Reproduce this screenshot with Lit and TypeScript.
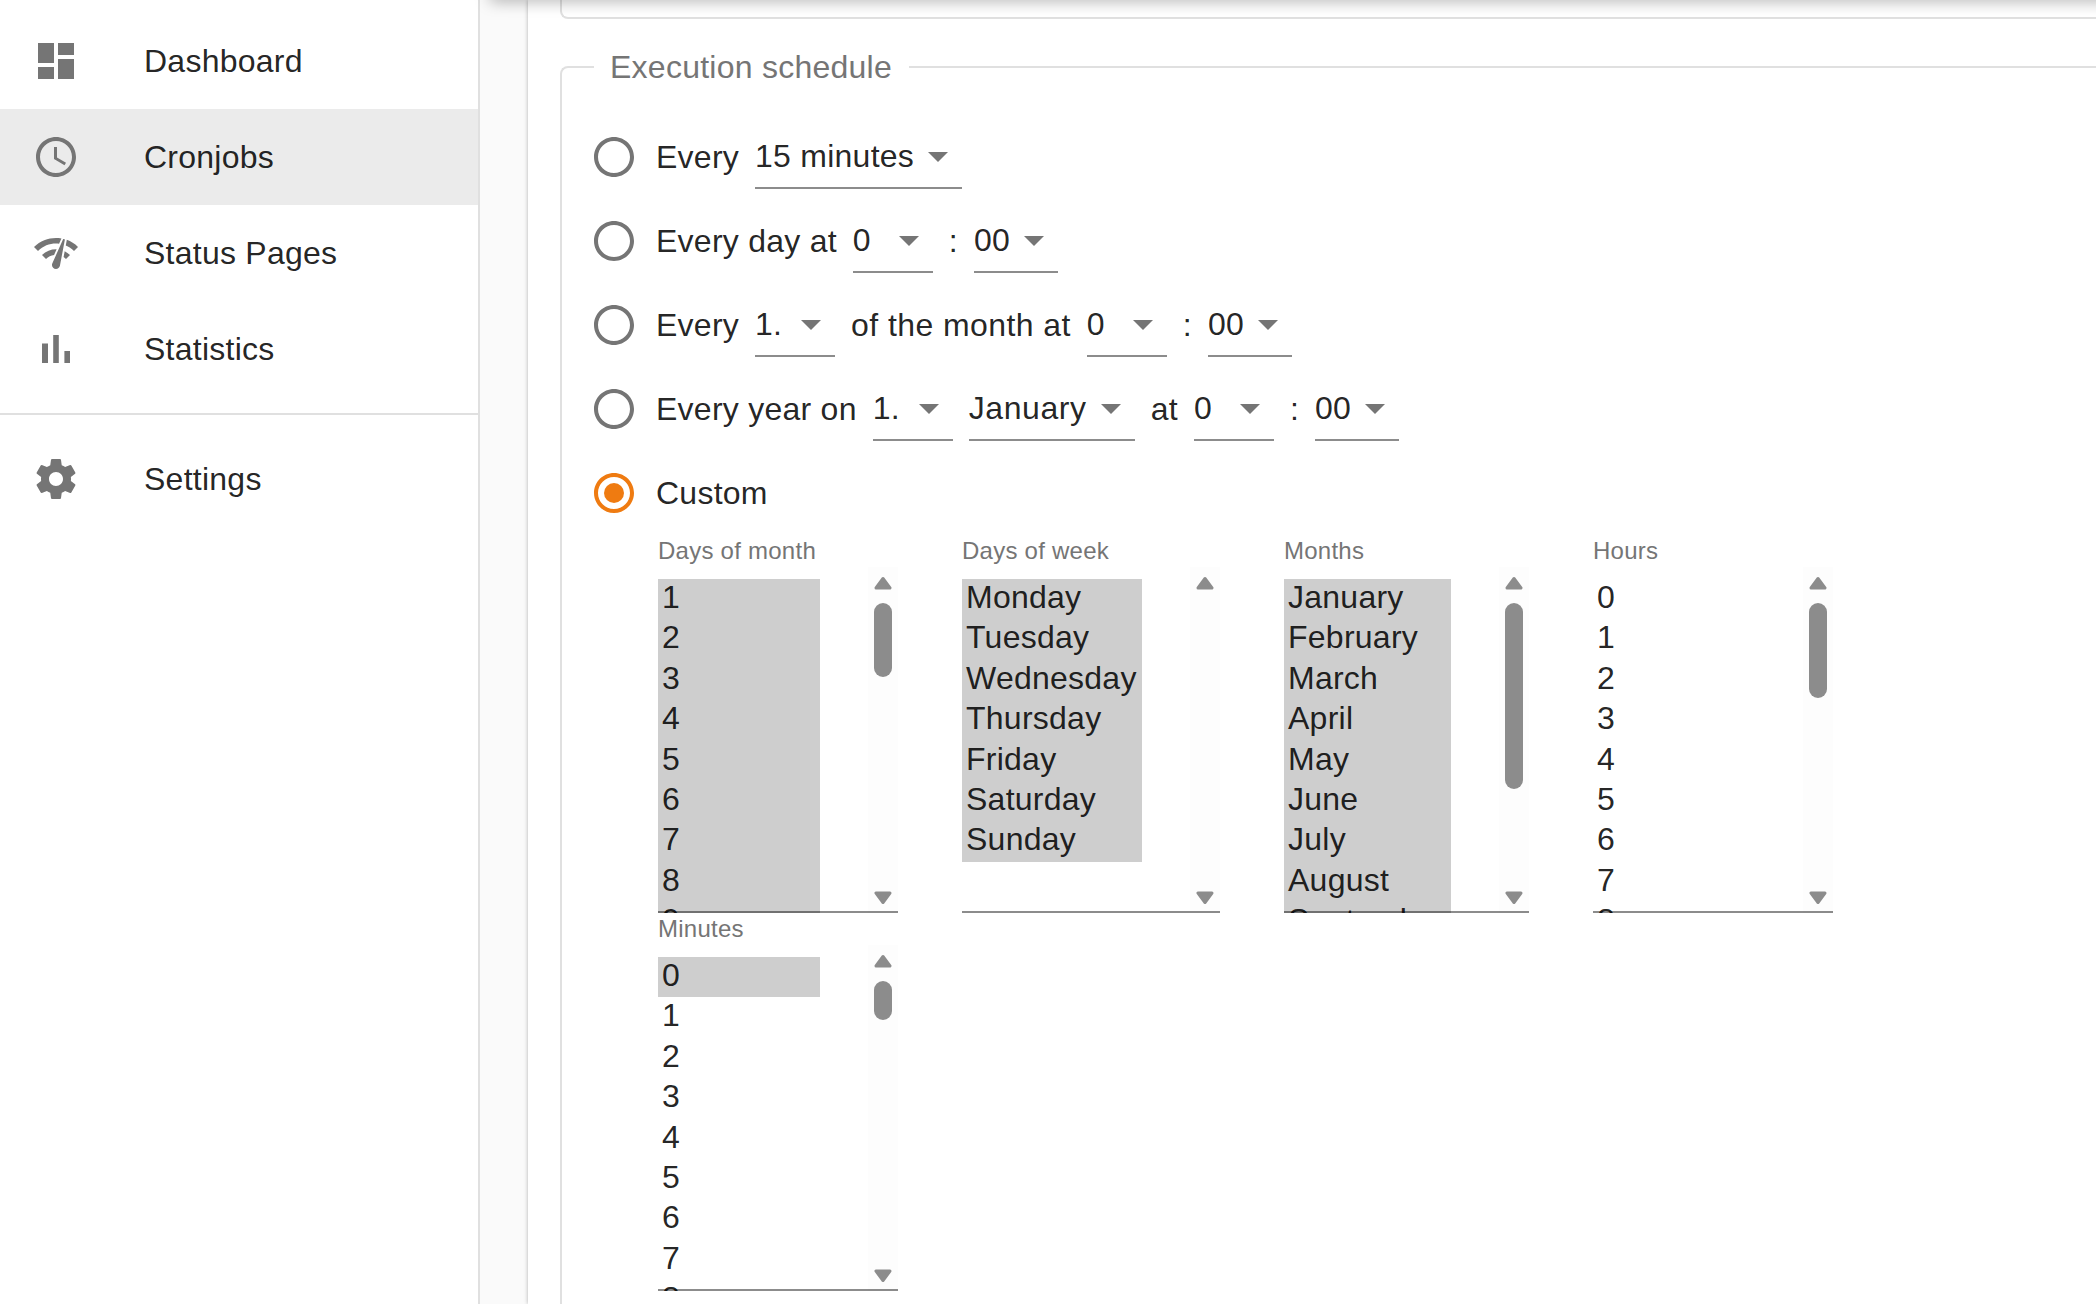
import { LitElement, html, css, svg } from "lit";
import { customElement } from "lit/decorators.js";

const ICONS: Record<string, string> = {
  dashboard: "M3 13h8V3H3v10zm0 8h8v-6H3v6zm10 0h8V11h-8v10zm0-18v6h8V3h-8z",
  clock:
    "M11.99 2C6.47 2 2 6.48 2 12s4.47 10 9.99 10C17.52 22 22 17.52 22 12S17.52 2 11.99 2zM12 20c-4.42 0-8-3.58-8-8s3.58-8 8-8 8 3.58 8 8-3.58 8-8 8zM12.5 7H11v6l5.25 3.15.75-1.23-4.5-2.67z",
  network:
    "M15.9 5c-.17 0-.32.09-.41.23l-.07.15-5.18 11.65c-.16.29-.26.61-.26.96 0 1.11.9 2.01 2.01 2.01.96 0 1.77-.68 1.96-1.59l.01-.03L16.4 5.5c0-.28-.22-.5-.5-.5zM1 9l2 2c2.88-2.88 6.79-4.08 10.53-3.62l1.19-2.68C9.89 3.84 4.74 5.27 1 9zm20 2l2-2c-1.64-1.64-3.55-2.82-5.59-3.57l-.53 2.82c1.5.62 2.9 1.53 4.12 2.75zm-4 4l2-2c-.8-.8-1.7-1.42-2.66-1.89l-.55 2.92c.42.27.83.59 1.21.97zM5 13l2 2c1.13-1.13 2.56-1.79 4.03-2l1.28-2.88c-2.63-.08-5.3.87-7.31 2.88z",
  bars: "M5 9.2h3V19H5zM10.6 5h2.8v14h-2.8zm5.6 8H19v6h-2.8z",
  gear: "M19.43 12.98c.04-.32.07-.64.07-.98s-.03-.66-.07-.98l2.11-1.65c.19-.15.24-.42.12-.64l-2-3.46c-.12-.22-.39-.3-.61-.22l-2.49 1c-.52-.4-1.08-.73-1.69-.98l-.38-2.65C14.46 2.18 14.25 2 14 2h-4c-.25 0-.46.18-.49.42l-.38 2.65c-.61.25-1.17.59-1.69.98l-2.49-1c-.23-.09-.49 0-.61.22l-2 3.46c-.13.22-.07.49.12.64l2.11 1.65c-.04.32-.07.65-.07.98s.03.66.07.98l-2.11 1.65c-.19.15-.24.42-.12.64l2 3.46c.12.22.39.3.61.22l2.49-1c.52.4 1.08.73 1.69.98l.38 2.65c.03.24.24.42.49.42h4c.25 0 .46-.18.49-.42l.38-2.65c.61-.25 1.17-.59 1.69-.98l2.49 1c.23.09.49 0 .61-.22l2-3.46c.12-.22.07-.49-.12-.64l-2.11-1.65zM12 15.5c-1.93 0-3.5-1.57-3.5-3.5s1.57-3.5 3.5-3.5 3.5 1.57 3.5 3.5-1.57 3.5-3.5 3.5z",
};

const icon = (name: string) =>
  html`<svg class="nav-icon" viewBox="0 0 24 24"><path d=${ICONS[name]}></path></svg>`;

const select = (value: string, wide = false) => html`<span class="select">
  <span class="value ${wide ? "wide" : ""}">${value}</span>
  <svg class="caret" viewBox="0 0 24 24"><path d="M7 10l5 5 5-5z"></path></svg>
</span>`;

const radio = (checked = false) => html`<svg class="radio ${checked ? "on" : ""}" viewBox="0 0 24 24">
  <path d="M12 2C6.48 2 2 6.48 2 12s4.48 10 10 10 10-4.48 10-10S17.52 2 12 2zm0 18c-4.42 0-8-3.58-8-8s3.58-8 8-8 8 3.58 8 8-3.58 8-8 8z"></path>
  ${checked ? svg`<circle cx="12" cy="12" r="5"></circle>` : ""}
</svg>`;

const upArrow = html`<svg class="sb-arrow" viewBox="0 0 18 14"><path d="M9 2.5 L16 12 H2 Z"></path></svg>`;
const downArrow = html`<svg class="sb-arrow" viewBox="0 0 18 14"><path d="M2 2 H16 L9 11.5 Z"></path></svg>`;

interface ListDef {
  label: string;
  width: number;
  optWidth: number;
  thumb: number;
  options: string[];
  selected: number[];
}

const range = (from: number, to: number) => {
  const out: string[] = [];
  for (let i = from; i <= to; i++) out.push(String(i));
  return out;
};
const all = (n: number) => Array.from({ length: n }, (_, i) => i);

const LISTS: ListDef[] = [
  { label: "Days of month", width: 240, optWidth: 162, thumb: 74, options: range(1, 9), selected: all(9) },
  {
    label: "Days of week",
    width: 258,
    optWidth: 180,
    thumb: 0,
    options: ["Monday", "Tuesday", "Wednesday", "Thursday", "Friday", "Saturday", "Sunday"],
    selected: all(7),
  },
  {
    label: "Months",
    width: 245,
    optWidth: 167,
    thumb: 186,
    options: ["January", "February", "March", "April", "May", "June", "July", "August", "September"],
    selected: all(9),
  },
  { label: "Hours", width: 240, optWidth: 162, thumb: 95, options: range(0, 8), selected: [] },
  { label: "Minutes", width: 240, optWidth: 162, thumb: 39, options: range(0, 8), selected: [0] },
];

@customElement("app-root")
export class AppRoot extends LitElement {
  static styles = css`
    :host {
      display: flex;
      position: relative;
      width: 2096px;
      height: 1304px;
      overflow: hidden;
      background: #fafafa;
      font-family: "Liberation Sans", Arial, sans-serif;
      font-size: 32px;
      letter-spacing: 0.25px;
      color: rgba(0, 0, 0, 0.87);
    }
    .sidebar {
      flex: none;
      width: 480px;
      box-sizing: border-box;
      background: #fff;
      border-right: 2px solid #e0e0e0;
      padding-top: 13px;
    }
    .nav-list {
      padding-bottom: 16px;
      border-bottom: 2px solid #e0e0e0;
      margin-bottom: 16px;
    }
    .nav-item {
      display: flex;
      align-items: center;
      height: 96px;
      padding-left: 32px;
      box-sizing: border-box;
    }
    .nav-item.active {
      background: #ebebeb;
    }
    .nav-icon {
      flex: none;
      width: 48px;
      height: 48px;
      fill: #757575;
      margin-right: 64px;
    }
    .content {
      flex: 1;
      min-width: 0;
      padding-left: 48px;
    }
    .card {
      height: 100%;
      background: #fff;
      box-shadow: 0 0 4px rgba(0, 0, 0, 0.3);
      padding-left: 32px;
    }
    .appbar-shadow {
      position: absolute;
      left: 490px;
      right: -20px;
      top: -10px;
      height: 10px;
      box-shadow: 0 0 16px rgba(0, 0, 0, 0.4);
    }
    .tail {
      height: 19px;
      box-sizing: border-box;
      border: 2px solid #e0e0e0;
      border-top: none;
      border-right: none;
      border-bottom-left-radius: 8px;
      margin-bottom: 48px;
    }
    fieldset {
      margin: -18px 0 0;
      padding: 30px 0 0 32px;
      border: 2px solid #e0e0e0;
      border-right: none;
      border-top-left-radius: 8px;
      min-width: 0;
      height: 1300px;
      box-sizing: border-box;
    }
    legend {
      margin-left: 0;
      padding: 0 17px 0 16px;
      line-height: 36px;
      color: #757575;
    }
    .row {
      display: flex;
      align-items: center;
      height: 84px;
      gap: 16px;
    }
    .radio {
      flex: none;
      width: 48px;
      height: 48px;
      fill: #757575;
      margin-left: -4px;
      margin-right: 2px;
    }
    .radio.on {
      fill: #ef7b11;
    }
    .select {
      flex: none;
      display: flex;
      align-items: center;
      height: 64px;
      box-sizing: border-box;
      border-bottom: 2px solid rgba(0, 0, 0, 0.45);
    }
    .value {
      min-width: 32px;
      line-height: 38px;
      white-space: nowrap;
    }
    .wide {
      letter-spacing: 0.6px;
    }
    .phrase {
      letter-spacing: 0.42px;
    }
    .caret {
      flex: none;
      width: 48px;
      height: 48px;
      fill: #757575;
    }
    .lists {
      display: flex;
      flex-wrap: wrap;
      gap: 0 64px;
      padding-left: 64px;
    }
    .col-label {
      font-size: 24px;
      line-height: 32px;
      color: #757575;
    }
    .list {
      display: flex;
      position: relative;
      height: 346px;
      box-sizing: border-box;
    }
    .list::after {
      content: "";
      position: absolute;
      left: 0;
      right: 0;
      bottom: 0;
      height: 2px;
      background: rgba(0, 0, 0, 0.45);
    }
    .opts {
      flex: 1;
      padding-top: 12px;
      overflow: hidden;
    }
    .opt {
      height: 40.4px;
      line-height: 36px;
      padding-left: 4px;
      box-sizing: border-box;
      white-space: nowrap;
    }
    .opt.sel {
      background: #cecece;
    }
    .scrollbar {
      flex: none;
      width: 30px;
      box-sizing: border-box;
      padding: 9px 6px 8px;
      background: #fdfdfd;
      display: flex;
      flex-direction: column;
    }
    .sb-arrow {
      flex: none;
      width: 18px;
      height: 14px;
      fill: #8c8c8c;
      stroke: #8c8c8c;
      stroke-width: 3;
      stroke-linejoin: round;
    }
    .thumb {
      flex: none;
      margin-top: 13px;
      border-radius: 9px;
      background: #8c8c8c;
    }
    .sb-space {
      flex: 1;
    }
  `;

  private renderList(l: ListDef) {
    return html`<div style="width:${l.width}px">
      <div class="col-label">${l.label}</div>
      <div class="list">
        <div class="opts">
          ${l.options.map(
            (o, i) =>
              html`<div class="opt ${l.selected.includes(i) ? "sel" : ""}" style="width:${l.optWidth}px">${o}</div>`
          )}
        </div>
        <div class="scrollbar">
          ${upArrow}
          ${l.thumb ? html`<div class="thumb" style="height:${l.thumb}px"></div>` : ""}
          <div class="sb-space"></div>
          ${downArrow}
        </div>
      </div>
    </div>`;
  }

  render() {
    return html`
      <nav class="sidebar">
        <div class="nav-list">
          <div class="nav-item">${icon("dashboard")}Dashboard</div>
          <div class="nav-item active">${icon("clock")}Cronjobs</div>
          <div class="nav-item">${icon("network")}Status Pages</div>
          <div class="nav-item">${icon("bars")}Statistics</div>
        </div>
        <div class="nav-item">${icon("gear")}Settings</div>
      </nav>
      <main class="content">
        <div class="card">
          <div class="tail"></div>
          <fieldset>
            <legend>Execution schedule</legend>
            <div class="row">${radio()}<span>Every</span>${select("15 minutes")}</div>
            <div class="row">${radio()}<span>Every day at</span>${select("0")}<span>:</span>${select("00")}</div>
            <div class="row">${radio()}<span>Every</span>${select("1.")}<span class="phrase">of the month at</span>${select("0")}<span>:</span>${select("00")}</div>
            <div class="row">${radio()}<span>Every year on</span>${select("1.")}${select("January", true)}<span>at</span>${select("0")}<span>:</span>${select("00")}</div>
            <div class="row">${radio(true)}<span>Custom</span></div>
            <div class="lists">${LISTS.map((l) => this.renderList(l))}</div>
          </fieldset>
        </div>
      </main>
      <div class="appbar-shadow"></div>
    `;
  }
}
